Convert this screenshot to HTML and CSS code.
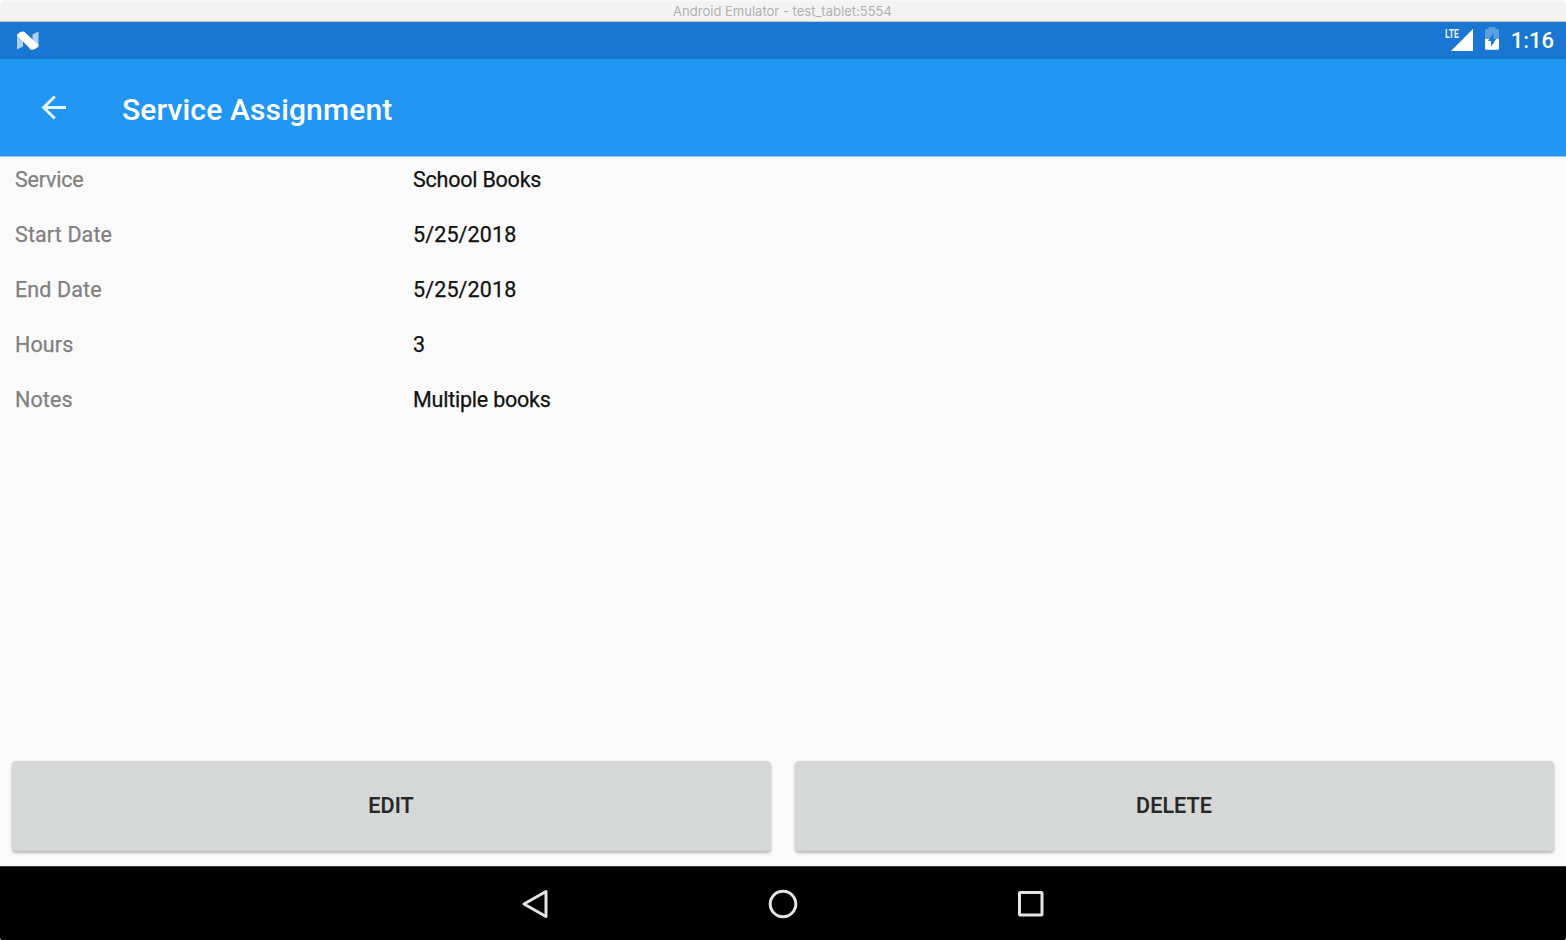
FILE: index.html
```html
<!DOCTYPE html>
<html lang="en">
<head>
<meta charset="utf-8">
<title>Service Assignment</title>
<link rel="stylesheet" href="styles.css">
</head>
<body>
<div class="window">
  <div class="window-title"><span>Android Emulator - test_tablet:5554</span></div>
  <div class="status-bar">
    <svg class="n-logo" width="24" height="20" viewBox="0 0 24 20">
      <path d="M1 3.500 7 .8V15.500L1 18.500zM16.500 3.500l6-2.900v15.400l-6 2.800z" fill="#fff" fill-opacity=".65"/>
      <path d="M1 4.500Q3 .4 8 .6L22.500 14Q20.500 18.900 15 18.700z" fill="#fff"/>
    </svg>
    <div class="status-icons">
      <div class="signal">
        <svg width="30" height="29" viewBox="-1 -5 30 29">
          <text class="lte" x="0" y="9" textLength="14" lengthAdjust="spacingAndGlyphs">LTE</text>
          <path d="M28 0v22H6z" fill="#fff"/>
        </svg>
      </div>
      <svg class="battery" width="14" height="23" viewBox="0 0 14 23">
        <path d="M0 3.500Q0 2 1.500 2H3.500V0h7v2h2Q14 2 14 3.500V12H0z" fill="#fff" fill-opacity=".3"/>
        <path d="M0 12h14v9.500q0 1.200-1.200 1.200H1.200Q0 22.700 0 21.500z" fill="#fff"/>
        <path d="M8.500 6v6h2.800L6 19.500V14H3z" fill="#1976d2"/>
      </svg>
      <span class="clock">1:16</span>
    </div>
  </div>
  <header class="app-bar">
    <svg class="back" width="26" height="26" viewBox="0 0 26 26"><path d="M13.800 1.500 2.600 12.500l11.200 11M2.500 12.500H25" fill="none" stroke="#fff" stroke-opacity=".9" stroke-width="3"/></svg>
    <h1>Service Assignment</h1>
  </header>
  <main class="content">
    <dl class="details">
      <dt class="tight">Service</dt><dd class="tight">School Books</dd>
      <dt>Start Date</dt><dd>5/25/2018</dd>
      <dt>End Date</dt><dd>5/25/2018</dd>
      <dt>Hours</dt><dd>3</dd>
      <dt>Notes</dt><dd class="tight">Multiple books</dd>
    </dl>
    <div class="actions">
      <button type="button">EDIT</button>
      <button type="button">DELETE</button>
    </div>
  </main>
  <nav class="nav-bar">
    <svg width="30" height="30" viewBox="0 0 30 30"><path d="M4 15 26 2.500v25z"/></svg>
    <svg width="30" height="30" viewBox="0 0 30 30"><circle cx="15" cy="15" r="12.800"/></svg>
    <svg width="30" height="30" viewBox="0 0 30 30"><rect x="3.500" y="3.500" width="22.500" height="22.500" rx=".5"/></svg>
  </nav>
</div>
</body>
</html>
```
FILE: styles.css
```css
* { box-sizing: border-box; }
body { margin: 0; background: #fff; font-family: Roboto, sans-serif; }
.window {
  width: 1566px;
  height: 940px;
  display: flex;
  flex-direction: column;
  overflow: hidden;
  border-radius: 5px 5px 2px 2px;
}
.window-title {
  height: 22px;
  flex: none;
  background: #f3f3f3;
  border-top: 1px solid #f8f8f8;
  border-bottom: 1px solid #c9c9c9;
  color: #b0b0b0;
  font: 13px/21px Inter, sans-serif;
  text-align: center;
  letter-spacing: 0.01px;
  padding-right: 1px;
}
.status-bar {
  height: 37px;
  flex: none;
  display: flex;
  justify-content: space-between;
  background: #1976d2;
  padding: 0 12px 0 16px;
}
.n-logo { margin-top: 9px; }
.status-icons { display: flex; }
.signal { margin: 2px 11px 0 0; }
.lte {
  fill: #e8f1fa;
  font: 700 12px Roboto, sans-serif;
}
.battery { margin: 5px 12px 0 0; }
.clock {
  color: #fff;
  font-size: 22px;
  font-weight: 500;
  line-height: 38px;
}
.app-bar {
  height: 97px;
  flex: none;
  display: flex;
  background: #2196f3;
  padding-left: 41px;
}
.back { margin-top: 36px; }
.app-bar h1 {
  margin: 0 0 0 55px;
  color: #fff;
  font-size: 30px;
  font-weight: 500;
  line-height: 101px;
  letter-spacing: 0.14px;
}
.content {
  flex: 1;
  display: flex;
  flex-direction: column;
  justify-content: space-between;
  background: #fafafa;
  border-top: 1px solid #90cbf9;
}
.details {
  display: grid;
  grid-template-columns: 398px 1fr;
  grid-auto-rows: 55px;
  margin: 0;
  padding-left: 15px;
  font-size: 21.5px;
  line-height: 46px;
  letter-spacing: 0.12px;
  -webkit-text-stroke: 0.25px;
}
.details dt { color: #808080; }
.details dd { margin: 0; color: #111; }
.details .tight { letter-spacing: -0.22px; }
.actions {
  display: grid;
  grid-template-columns: 1fr 1fr;
  gap: 24px;
  padding: 0 12px 15px;
}
.actions button {
  height: 90px;
  border: 0;
  border-radius: 4px;
  background: #d6d8d7;
  box-shadow: 0 2px 3px rgba(0, 0, 0, .28);
  color: #262727;
  font: 500 21.500px/90px Roboto, sans-serif;
  letter-spacing: 0.1px;
  -webkit-text-stroke: 0.2px;
  padding: 0 1px 0 0;
}
.nav-bar {
  height: 74px;
  flex: none;
  display: flex;
  justify-content: center;
  align-items: center;
  gap: 218px;
  background: #000;
  border-top: 1px solid #444;
}
.nav-bar svg { fill: none; stroke: #e4e4e4; stroke-width: 3; stroke-linejoin: round; }
```
